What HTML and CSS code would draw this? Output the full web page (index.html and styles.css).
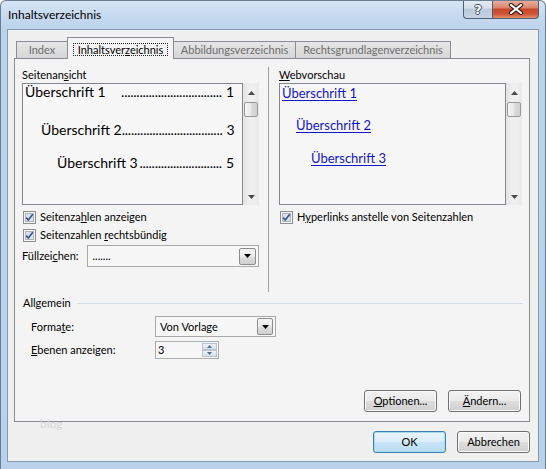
FILE: index.html
```html
<!DOCTYPE html>
<html lang="de">
<head>
<meta charset="utf-8">
<title>Inhaltsverzeichnis</title>
<link rel="stylesheet" href="styles.css">
</head>
<body>
<div class="window">
  <div class="titlebar">
    <div class="title">Inhaltsverzeichnis</div>
    <div class="caption">
      <div class="cap-btn help"><span class="qmark">?</span></div>
      <div class="cap-btn close">
        <svg width="16" height="12" viewBox="0 0 16 12"><path d="M3 2 L13 10 M13 2 L3 10" stroke="#3d2018" stroke-width="4.2" stroke-linecap="round"/><path d="M3 2 L13 10 M13 2 L3 10" stroke="#ffffff" stroke-width="2.2" stroke-linecap="round"/></svg>
      </div>
    </div>
  </div>
  <div class="client">
    <div class="tabs">
      <div class="tab t-index">Index</div>
      <div class="tab active"><span class="focus">Inhaltsver<u>z</u>eichnis</span></div>
      <div class="tab t-abb">Abbildungsverzeichnis</div>
      <div class="tab t-rech">Rechtsgrundlagenverzeichnis</div>
    </div>
    <div class="panel">
      <div class="top">
        <div class="col left">
          <div class="label">Seitenan<u>s</u>icht</div>
          <div class="listbox">
            <div class="lb-body print">
              <div class="toc l1"><span class="t">Überschrift 1</span><span class="dots">.................................</span><span class="n">1</span></div>
              <div class="toc l2"><span class="t">Überschrift 2</span><span class="dots">.................................</span><span class="n">3</span></div>
              <div class="toc l3"><span class="t">Überschrift 3</span><span class="dots">...........................</span><span class="n">5</span></div>
            </div>
            <div class="scrollbar">
              <div class="sb-up"><svg width="7" height="4" viewBox="0 0 7 4"><path d="M0 4 L3.5 0 L7 4 Z" fill="#4a4a4a"/></svg></div>
              <div class="sb-thumb"></div>
              <div class="sb-space"></div>
              <div class="sb-down"><svg width="7" height="4" viewBox="0 0 7 4"><path d="M0 0 L7 0 L3.5 4 Z" fill="#4a4a4a"/></svg></div>
            </div>
          </div>
          <div class="check first">
            <svg class="cb" width="13" height="13" viewBox="0 0 13 13"><rect x="0.5" y="0.5" width="12" height="12" fill="#f6f6f6" stroke="#8e8f8f"/><rect x="2.5" y="2.5" width="8" height="8" fill="#dfe2e7" stroke="#b0b4ba"/><path d="M3.2 6.6 L5.3 9 L9.8 3.3" fill="none" stroke="#3b5590" stroke-width="1.7"/></svg>
            <span>Seitenza<u>h</u>len anzeigen</span>
          </div>
          <div class="check">
            <svg class="cb" width="13" height="13" viewBox="0 0 13 13"><rect x="0.5" y="0.5" width="12" height="12" fill="#f6f6f6" stroke="#8e8f8f"/><rect x="2.5" y="2.5" width="8" height="8" fill="#dfe2e7" stroke="#b0b4ba"/><path d="M3.2 6.6 L5.3 9 L9.8 3.3" fill="none" stroke="#3b5590" stroke-width="1.7"/></svg>
            <span>Seitenzahlen <u>r</u>echtsbündig</span>
          </div>
          <div class="fill-row">
            <span class="fill-label">Füllzei<u>c</u>hen:</span>
            <div class="combo fill">
              <span class="combo-text">.......</span>
              <div class="combo-btn"><svg width="7" height="4" viewBox="0 0 7 4"><path d="M0 0 L7 0 L3.5 4 Z" fill="#000"/></svg></div>
            </div>
          </div>
        </div>
        <div class="vsep"></div>
        <div class="col right">
          <div class="label"><u>W</u>ebvorschau</div>
          <div class="listbox">
            <div class="lb-body web">
              <div class="wl w1"><a>Überschrift 1</a></div>
              <div class="wl w2"><a>Überschrift 2</a></div>
              <div class="wl w3"><a>Überschrift 3</a></div>
            </div>
            <div class="scrollbar">
              <div class="sb-up"><svg width="7" height="4" viewBox="0 0 7 4"><path d="M0 4 L3.5 0 L7 4 Z" fill="#4a4a4a"/></svg></div>
              <div class="sb-thumb"></div>
              <div class="sb-space"></div>
              <div class="sb-down"><svg width="7" height="4" viewBox="0 0 7 4"><path d="M0 0 L7 0 L3.5 4 Z" fill="#4a4a4a"/></svg></div>
            </div>
          </div>
          <div class="check first">
            <svg class="cb" width="13" height="13" viewBox="0 0 13 13"><rect x="0.5" y="0.5" width="12" height="12" fill="#f6f6f6" stroke="#8e8f8f"/><rect x="2.5" y="2.5" width="8" height="8" fill="#dfe2e7" stroke="#b0b4ba"/><path d="M3.2 6.6 L5.3 9 L9.8 3.3" fill="none" stroke="#3b5590" stroke-width="1.7"/></svg>
            <span>H<u>y</u>perlinks anstelle von Seitenzahlen</span>
          </div>
        </div>
      </div>
      <div class="group-head"><span>Allgemein</span><div class="hline"></div></div>
      <div class="form-row r1">
        <span class="flabel">Forma<u>t</u>e:</span>
        <div class="combo wide">
          <span class="combo-text">Von Vorlage</span>
          <div class="combo-btn"><svg width="7" height="4" viewBox="0 0 7 4"><path d="M0 0 L7 0 L3.5 4 Z" fill="#000"/></svg></div>
        </div>
      </div>
      <div class="form-row r2">
        <span class="flabel"><u>E</u>benen anzeigen:</span>
        <div class="spin">
          <span class="spin-text">3</span>
          <div class="spin-btns">
            <div class="spin-btn"><svg width="5" height="3" viewBox="0 0 5 3"><path d="M0 3 L2.5 0 L5 3 Z" fill="#56708f"/></svg></div>
            <div class="spin-btn"><svg width="5" height="3" viewBox="0 0 5 3"><path d="M0 0 L5 0 L2.5 3 Z" fill="#56708f"/></svg></div>
          </div>
        </div>
      </div>
      <div class="panel-btns">
        <div class="btn"><span><u>O</u>ptionen...</span></div>
        <div class="btn"><span><u>Ä</u>ndern...</span></div>
      </div>
    </div>
    <div class="dlg-btns">
      <div class="btn default"><span>OK</span></div>
      <div class="btn"><span>Abbrechen</span></div>
    </div>
    <div class="watermark">blog</div>
  </div>
</div>
</body>
</html>
```
FILE: styles.css
```css
* { box-sizing: border-box; }
html, body { margin: 0; padding: 0; }
body {
  background: #ffffff;
  font-family: Lato, "Liberation Sans", sans-serif;
  font-size: 11px;
  line-height: 14px;
  color: #000;
}
u { text-decoration: underline; text-underline-offset: 1px; }

.window {
  width: 546px;
  height: 469px;
  border: 1px solid #6b7d91;
  border-bottom: 0;
  border-radius: 6px 6px 0 0;
  background: linear-gradient(180deg, #d6e5f5 0px, #c6daf0 14px, #bcd3ec 30px, #b9d1ea 100%);
  padding: 0 6px 7px;
  display: flex;
  flex-direction: column;
  overflow: hidden;
}
.titlebar { height: 28px; flex: none; display: flex; align-items: flex-start; }
.title { margin: 6px 0 0 1px; font-size: 12px; line-height: 15px; }
.caption { margin: -1px 0 0 auto; display: flex; }
.cap-btn {
  height: 19px;
  display: flex;
  align-items: center;
  justify-content: center;
  border: 1px solid #4f6074;
  border-top: 0;
}
.help {
  width: 29px;
  border-right: 0;
  border-radius: 0 0 0 4px;
  background: linear-gradient(180deg, #e6edf5 0%, #d3deeb 45%, #b9c9db 52%, #c7d5e4 100%);
}
.qmark {
  color: #fff;
  font-family: "DejaVu Sans", sans-serif;
  font-weight: bold;
  font-size: 13px;
  line-height: 13px;
  text-shadow: 1px 0 0 #3f4d5e, -1px 0 0 #3f4d5e, 0 1px 0 #3f4d5e, 0 -1px 0 #3f4d5e;
}
.close {
  width: 47px;
  border-radius: 0 0 4px 0;
  background: linear-gradient(180deg, #ebb3a4 0%, #db8670 42%, #c8482c 52%, #cf5436 78%, #e2906a 100%);
}

.client {
  position: relative;
  height: 433px;
  flex: none;
  border: 1px solid #8699ae;
  background: #f0f0f0;
  display: flex;
  flex-direction: column;
}

.tabs {
  display: flex;
  align-items: flex-end;
  height: 22px;
  margin: 7px 0 0 8px;
  position: relative;
  z-index: 2;
  flex: none;
}
.tab {
  height: 17px;
  margin-bottom: 1px;
  border-top: 1px solid #898c95;
  background: linear-gradient(180deg, #e6e6e6, #d6d6d6);
  color: #6d6d6d;
  display: flex;
  align-items: center;
  justify-content: center;
  white-space: nowrap;
}
.t-index { width: 51px; border-left: 1px solid #898c95; }
.t-abb { width: 122px; border-right: 1px solid #898c95; }
.t-rech { width: 155px; border-right: 1px solid #898c95; }
.tab.active {
  width: 107px;
  height: 22px;
  margin-bottom: 0;
  border: 1px solid #898c95;
  border-bottom: 0;
  background: #f4f4f4;
  color: #000;
  padding-top: 2px;
}
.focus { border: 1px dotted #222; padding: 0 4px; height: 13px; line-height: 11px; }

.panel {
  margin: -1px 0 0 6px;
  width: 516px;
  height: 364px;
  flex: none;
  border: 1px solid #898c95;
  background: #f4f4f4;
  display: flex;
  flex-direction: column;
  position: relative;
  z-index: 1;
}
.top { display: flex; height: 233px; flex: none; padding: 8px 0 0 7px; }
.col.left { width: 237px; }
.col.right { width: 243px; }
.vsep { width: 1px; background: #a0a0a0; margin: 0 10px 0 9px; }
.label { margin-top: 1px; height: 14px; }

.listbox { display: flex; height: 122px; margin-top: 1px; }
.lb-body { flex: 1; border: 1px solid #828790; background: #f7f7f7; overflow: hidden; }
.scrollbar {
  width: 16px;
  display: flex;
  flex-direction: column;
  align-items: center;
  background: linear-gradient(90deg, #e4e4e4, #efefef 40%, #efefef 70%, #e8e8e8);
}
.sb-up { width: 100%; height: 19px; display: flex; align-items: center; justify-content: center; }
.sb-thumb {
  width: 14px;
  height: 15px;
  border: 1px solid #979797;
  border-radius: 2px;
  background: linear-gradient(90deg, #f5f5f5, #e9e9e9 50%, #dadada 55%, #d2d2d2);
}
.sb-space { flex: 1; }
.sb-down { width: 100%; height: 17px; display: flex; align-items: center; justify-content: center; }

.print { font-family: Lato, "Liberation Sans", sans-serif; font-size: 14px; padding: 0 8px 0 2px; }
.toc { display: flex; height: 16px; line-height: 16px; white-space: nowrap; }
.toc .t { flex: none; }
.toc .dots { flex: none; margin-left: auto; letter-spacing: -0.25px; }
.toc .n { flex: none; margin-left: 4px; }
.l2 { margin-top: 22px; padding-left: 16px; }
.l3 { margin-top: 17px; padding-left: 32px; }

.web { font-size: 13px; padding-left: 2px; }
.wl { height: 16px; line-height: 16px; white-space: nowrap; }
.wl a { color: #1414c8; text-decoration: underline; text-underline-offset: 2px; }
.w1 { margin-top: 1px; }
.w2 { margin-top: 16px; padding-left: 14px; }
.w3 { margin-top: 17px; padding-left: 29px; }

.check { display: flex; align-items: center; height: 18px; gap: 4px; padding-left: 1px; white-space: nowrap; }
.check.first { margin-top: 3px; }
.cb { flex: none; }

.fill-row { display: flex; align-items: center; height: 22px; margin-top: 1px; }
.fill-label { width: 66px; }
.combo {
  display: flex;
  align-items: center;
  border: 1px solid #a9a9a9;
  background: #f7f7f7;
  padding: 0 2px 0 1px;
}
.combo.fill { width: 173px; height: 22px; }
.combo.wide { width: 121px; height: 21px; }
.combo-text { flex: 1; padding-left: 3px; white-space: nowrap; }
.combo-btn {
  width: 17px;
  height: 17px;
  border: 1px solid #8c8c8c;
  border-radius: 2px;
  background: linear-gradient(180deg, #f4f4f4, #ececec 50%, #dedede 52%, #d0d0d0);
  display: flex;
  align-items: center;
  justify-content: center;
}
.combo.wide .combo-btn { width: 16px; }

.group-head { display: flex; align-items: center; height: 14px; margin-top: 4px; padding: 0 6px 0 8px; flex: none; }
.hline { flex: 1; height: 1px; background: #d5dfe5; margin-left: 6px; }

.form-row { display: flex; align-items: center; padding-left: 16px; flex: none; }
.flabel { width: 124px; }
.r1 { margin-top: 6px; height: 21px; }
.r2 { margin-top: 4px; height: 18px; }
.spin {
  width: 64px;
  height: 18px;
  display: flex;
  border: 1px solid #abadb3;
  background: #f7f7f7;
  padding: 1px;
}
.spin-text { flex: 1; padding-left: 1px; line-height: 14px; }
.spin-btns { width: 15px; display: flex; flex-direction: column; }
.spin-btn {
  flex: 1;
  border: 1px solid #b9c4d1;
  background: linear-gradient(180deg, #eef3f8, #d6e0eb);
  display: flex;
  align-items: center;
  justify-content: center;
}

.panel-btns { margin-top: auto; margin-bottom: 9px; display: flex; justify-content: flex-end; gap: 11px; padding-right: 8px; flex: none; }
.dlg-btns { margin-top: 9px; display: flex; justify-content: flex-end; gap: 11px; padding-right: 8px; flex: none; }
.btn {
  width: 73px;
  height: 22px;
  border: 1px solid #707070;
  border-radius: 3px;
  background: linear-gradient(180deg, #f2f2f2 0%, #ebebeb 48%, #dddddd 52%, #cfcfcf 100%);
  box-shadow: inset 0 0 0 1px #fbfbfb;
  display: flex;
  align-items: center;
  justify-content: center;
  white-space: nowrap;
}
.btn.default {
  border-color: #3c7fb1;
  background: linear-gradient(180deg, #eaf5fc 0%, #dcedf9 48%, #c8e3f6 52%, #bcdcf2 100%);
  box-shadow: inset 0 0 0 1px #a8dcf5;
}
.watermark {
  position: absolute;
  left: 32px;
  top: 387px;
  z-index: 3;
  color: #d6d6d6;
  font-size: 12px;
}
```
